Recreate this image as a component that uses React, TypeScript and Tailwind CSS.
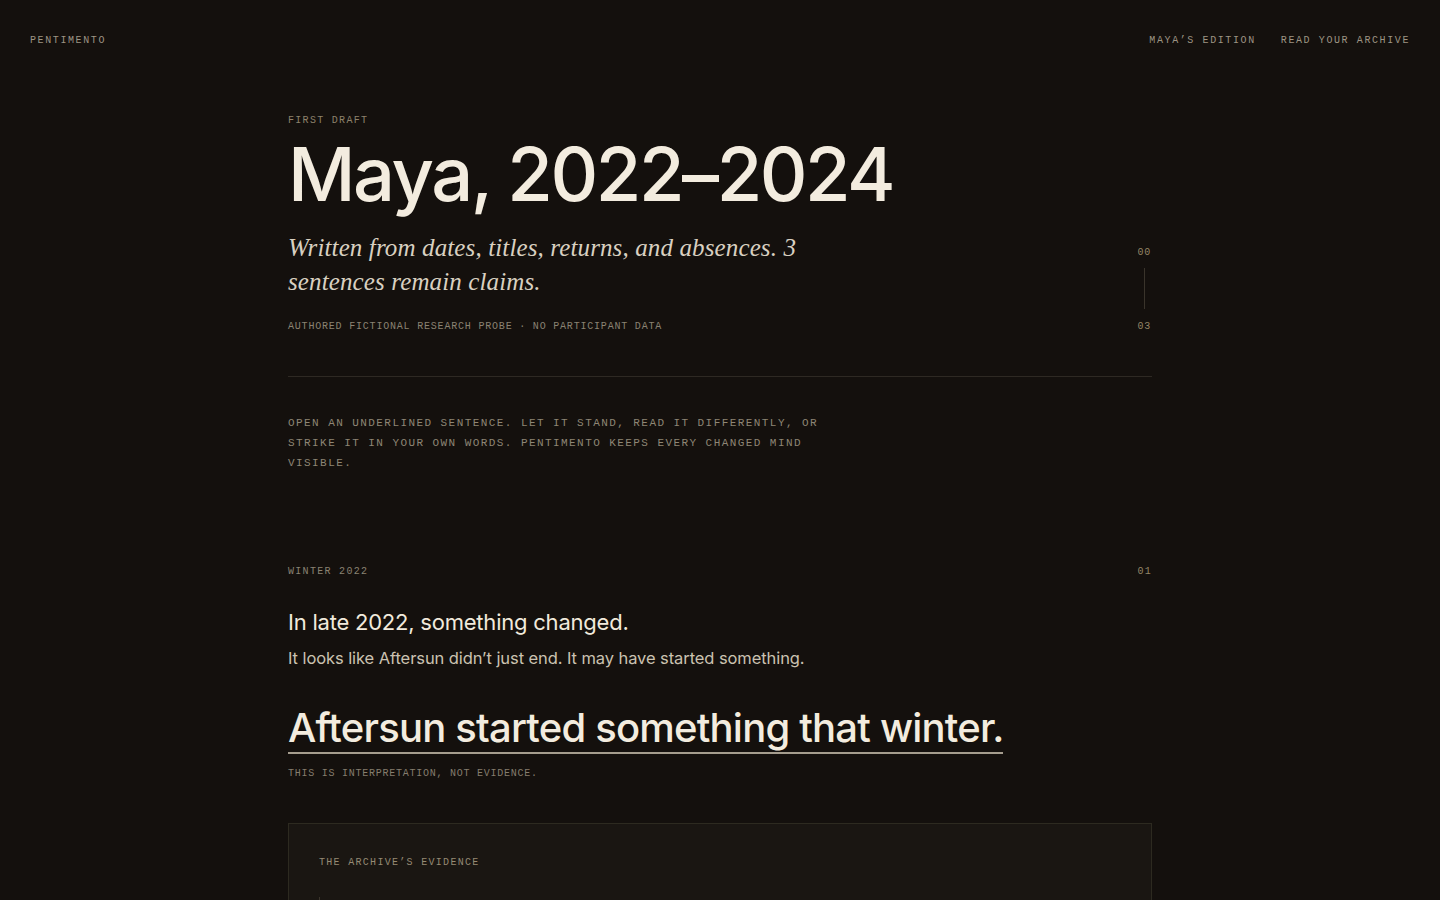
import React from "react";

const mono = { fontFamily: '"Liberation Mono", "DejaVu Sans Mono", monospace' };

const App = () => {
  return (
    <div className="min-h-screen bg-[#14100d] text-[#f1eadc] font-['Inter',sans-serif]">
      {/* top bar */}
      <header className="flex items-center justify-between px-[30px] pt-[35px]">
        <span
          className="text-[10px] leading-[12px] tracking-[0.16em] text-[#9d9484]"
          style={mono}
        >
          PENTIMENTO
        </span>
        <nav
          className="flex gap-[25px] text-[10px] leading-[12px] tracking-[0.16em] text-[#9d9484]"
          style={mono}
        >
          <span>MAYA’S EDITION</span>
          <span>READ YOUR ARCHIVE</span>
        </nav>
      </header>

      <main className="mx-auto max-w-[864px] pt-[68px]">
        {/* title block */}
        <p
          className="text-[10px] leading-[12px] tracking-[0.13em] text-[#8d816b]"
          style={mono}
        >
          FIRST DRAFT
        </p>
        <h1 className="mt-[10px] text-[74px] leading-[74px] font-medium tracking-[-0.033em] text-[#f3ecdf]">
          Maya, 2022–2024
        </h1>

        <div className="mt-[20px] flex justify-between">
          <div>
            <p className="max-w-[540px] font-['Liberation_Serif',serif] text-[25px] leading-[34px] italic tracking-[0.005em] text-[#d9d0c1]">
              Written from dates, titles, returns, and absences. 3 sentences
              remain claims.
            </p>
            <p
              className="mt-[22px] text-[10px] leading-[12px] tracking-[0.08em] text-[#8a8272]"
              style={mono}
            >
              AUTHORED FICTIONAL RESEARCH PROBE · NO PARTICIPANT DATA
            </p>
          </div>
          <div
            className="flex flex-col items-center pt-[16px] pr-px text-[10px] leading-[12px] tracking-[0.08em] text-[#958667]"
            style={mono}
          >
            <span>00</span>
            <span className="mt-[9px] mb-[12px] w-px flex-1 bg-[#3a342b]" />
            <span>03</span>
          </div>
        </div>

        <div className="mt-[43px] h-px bg-[#2e2923]" />

        <p
          className="mt-[36px] max-w-[540px] text-[11px] leading-[20px] tracking-[0.13em] text-[#8e8675]"
          style={mono}
        >
          OPEN AN UNDERLINED SENTENCE. LET IT STAND, READ IT DIFFERENTLY, OR
          STRIKE IT IN YOUR OWN WORDS. PENTIMENTO KEEPS EVERY CHANGED MIND
          VISIBLE.
        </p>

        {/* winter 2022 */}
        <section className="mt-[93px]">
          <div
            className="flex justify-between text-[10px] leading-[12px] tracking-[0.13em]"
            style={mono}
          >
            <span className="text-[#8a8272]">WINTER 2022</span>
            <span className="text-[#958667]">01</span>
          </div>

          <h2 className="mt-[30px] text-[22px] leading-[28px] tracking-[-0.01em] text-[#f1eadc]">
            In late 2022, something changed.
          </h2>
          <p className="mt-[10px] text-[16.5px] leading-[24px] tracking-[-0.005em] text-[#cbc2b1]">
            It looks like Aftersun didn’t just end. It may have started
            something.
          </p>

          <div className="mt-[36px]">
            <span className="inline-block border-b-2 border-[#a59d8e] pb-[2px] text-[40px] leading-[44px] font-medium tracking-[-0.02em] text-[#f3ecdf]">
              Aftersun started something that winter.
            </span>
          </div>
          <p
            className="mt-[14px] text-[10px] leading-[12px] tracking-[0.075em] text-[#857d6e]"
            style={mono}
          >
            THIS IS INTERPRETATION, NOT EVIDENCE.
          </p>

          {/* evidence card */}
          <div className="mt-[43px] border border-[#2d2a20] bg-[#1a1612] px-[30px] pt-[33px] pb-[40px]">
            <p
              className="text-[10px] leading-[12px] tracking-[0.13em] text-[#958a74]"
              style={mono}
            >
              THE ARCHIVE’S EVIDENCE
            </p>
            <div className="mt-[28px] h-[80px] border-l border-[#3a342b]" />
          </div>
        </section>
      </main>
    </div>
  );
};

export default App;
